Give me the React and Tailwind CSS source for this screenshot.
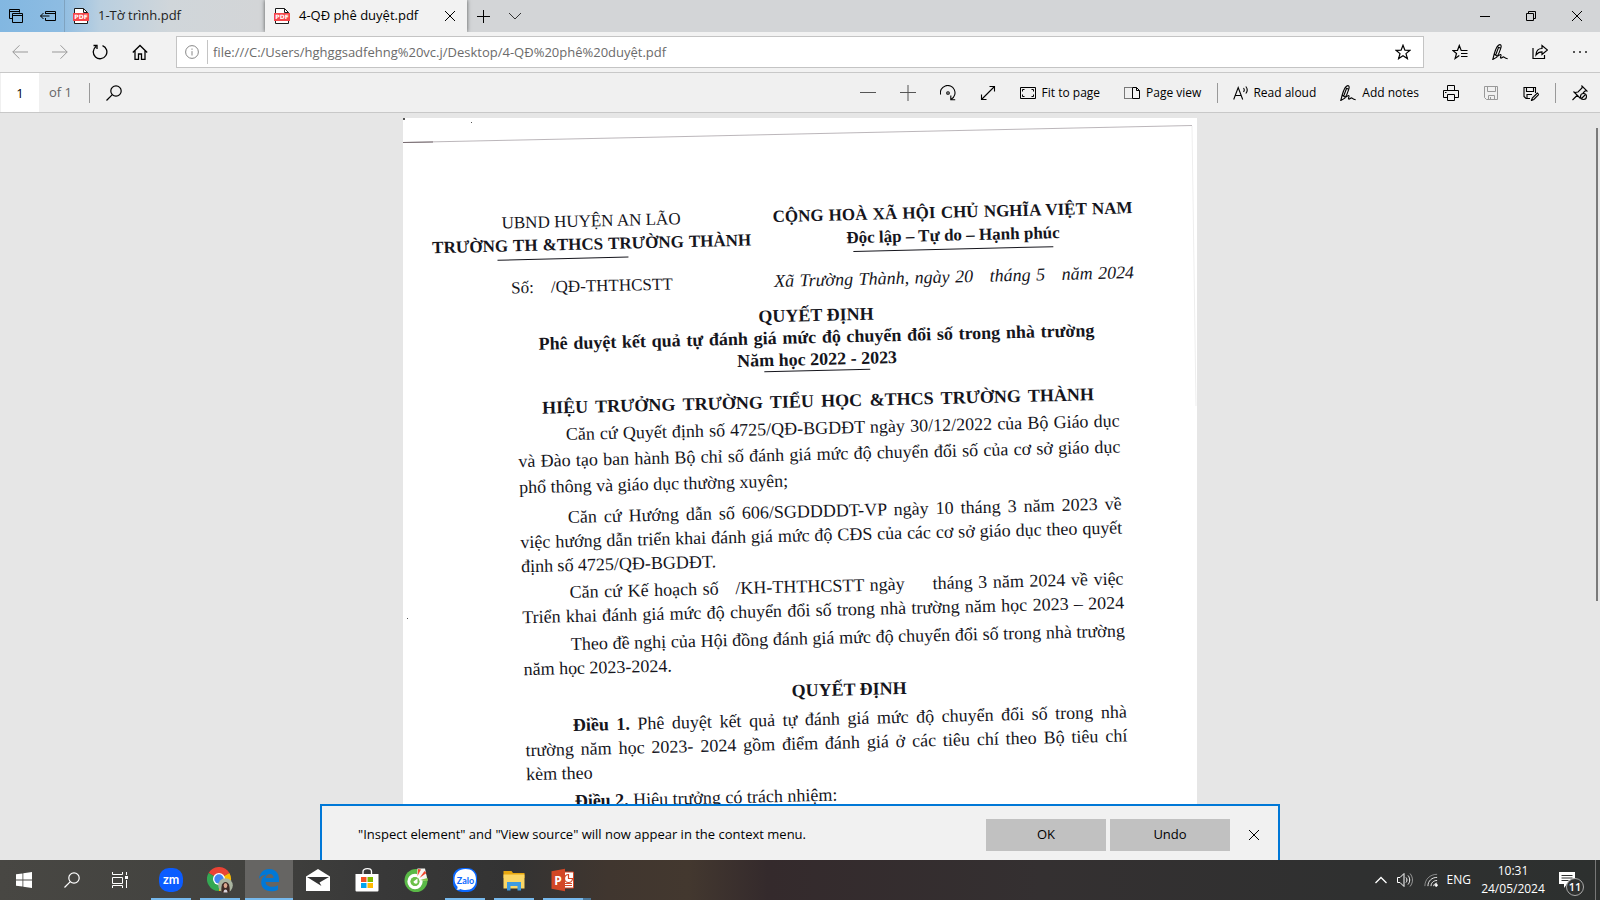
import { useState } from "react";

const underline = "after:absolute after:bottom-0 after:left-1 after:h-0.5 after:w-10 after:bg-[#76b9ed] after:content-['']";

const Icon = ({ children, className = "size-4", sw = 1 }) => (
  <svg
    className={className}
    viewBox="0 0 16 16"
    fill="none"
    stroke="currentColor"
    strokeWidth={sw}
    aria-hidden="true"
  >
    {children}
  </svg>
);

const CloseIcon = ({ className = "size-4" }) => (
  <Icon className={className}>
    <path d="M3 3l10 10M13 3L3 13" />
  </Icon>
);

const PenIcon = () => (
  <Icon sw={1.1}>
    <path d="M.8 15.500L2.200 10C3.500 5.500 5.500.8 7.800.6c1.700-.1 1.500 1.900 1 3.600C8 7 6.500 10.500 4.800 13.200L.8 15.500zM5.800 3l3 1.200M2.200 10l3 2.200M6.500 3.500L3.500 11.500M6 12.200c1.300-1.500 2.600-2.200 3-1.200.3.900-1.200 2.600-.3 3.100 1 .4 1.800-1.200 2.800-1.200s1 1.800 4.200 1.800" />
  </Icon>
);

const PdfIcon = () => (
  <svg className="size-4 shrink-0" viewBox="0 0 16 16" aria-hidden="true">
    <path d="M1.500.5h9l4 4v11h-13z" fill="#fff" stroke="#1b1b1b" />
    <path d="M10.500.5v4h4" fill="none" stroke="#1b1b1b" />
    <rect x="0" y="5" width="16" height="8" fill="#f5464a" />
    <text
      x="8"
      y="11.200"
      textAnchor="middle"
      fontSize="6"
      fontWeight="700"
      fill="#fff"
      fontFamily="DejaVu Sans"
    >
      PDF
    </text>
  </svg>
);

const IconButton = ({ label, className = "w-10", children }) => (
  <button
    type="button"
    aria-label={label}
    className={`flex h-full shrink-0 items-center justify-center ${className}`}
  >
    {children}
  </button>
);

const TabBar = () => (
  <div className="flex h-8 shrink-0 bg-[linear-gradient(90deg,#82b7e1_0px,#8dbce2_60px,#b9cfe0_100px,#d0d6da_170px,#d3d5d7_260px)]">
    <IconButton label="Tabs you've set aside" className="w-8">
      <Icon>
        <path d="M4.500 10.500H1.500v-9h10v3M1.500 3.500h10M4.500 5.500h10v9h-10zM4.500 7.500h10" />
      </Icon>
    </IconButton>
    <IconButton label="Set these tabs aside" className="w-8">
      <Icon>
        <path d="M5.500 6V3.500h10v9h-10V10M5.500 5.500h10M.5 8h9M3.500 5l-3 3 3 3" />
      </Icon>
    </IconButton>
    <div className="flex w-[201px] items-center gap-[9px] border-l border-[#7fa3c0] pl-2 text-[#222]">
      <PdfIcon />
      <span className="text-[13px]">1-Tờ trình.pdf</span>
    </div>
    <div className="flex w-[202px] items-center gap-[9px] bg-[#f2f2f2] pr-[9px] pl-[9px] text-black shadow-[0_0_4px_rgba(0,0,0,0.6)]">
      <PdfIcon />
      <span className="grow text-[13px]">4-QĐ phê duyệt.pdf</span>
      <button type="button" aria-label="Close tab">
        <CloseIcon />
      </button>
    </div>
    <IconButton label="New tab" className="w-8">
      <Icon>
        <path d="M8.500 2v13M2 8.500h13" />
      </Icon>
    </IconButton>
    <IconButton label="Show tab previews" className="w-8">
      <Icon className="size-4 text-[#333]">
        <path d="M2 5l6 6 6-6" />
      </Icon>
    </IconButton>
    <div className="ml-auto flex">
      <IconButton label="Minimize" className="w-[46px]">
        <Icon>
          <path d="M3 8.500h10" />
        </Icon>
      </IconButton>
      <IconButton label="Restore" className="w-[46px]">
        <Icon>
          <path d="M3.500 5.500h7v7h-7zM5.500 5.500v-2h7v7h-2" />
        </Icon>
      </IconButton>
      <IconButton label="Close" className="w-[46px]">
        <CloseIcon />
      </IconButton>
    </div>
  </div>
);

const NavBar = () => {
  const [url, setUrl] = useState(
    "file:///C:/Users/hghggsadfehng%20vc.j/Desktop/4-QĐ%20phê%20duyệt.pdf"
  );

  return (
    <div className="flex h-[41px] shrink-0 items-center border-b border-[#c8c8c8] bg-[#f2f2f2]">
      <IconButton label="Back">
        <Icon className="size-4 text-[#999]">
          <path d="M.8 8H16M7.500 1.300L.8 8l6.700 6.700" />
        </Icon>
      </IconButton>
      <IconButton label="Forward">
        <Icon className="size-4 text-[#999]">
          <path d="M0 8h15.200M8.500 1.300L15.200 8l-6.700 6.700" />
        </Icon>
      </IconButton>
      <IconButton label="Refresh">
        <Icon sw={1.3}>
          <path d="M10.500 1.600A6.800 6.800 0 1 1 4 2.500M1.500 1.500H5V5" />
        </Icon>
      </IconButton>
      <IconButton label="Home">
        <Icon sw={1.3}>
          <path d="M.8 8.500L8 1.500l7.200 7M3 6.800v8.500h3.500V10h3v5.300H13V6.800" />
        </Icon>
      </IconButton>
      <div className="mx-4 flex h-8 grow items-center border border-[#c4c4c4] bg-white">
        <Icon className="ml-2 size-[14px] text-[#777]">
          <circle cx="8" cy="8" r="7.300" />
          <path d="M8 7v5M8 4v1.500" />
        </Icon>
        <div className="ml-2 h-6 w-px bg-[#c4c4c4]" />
        <input
          aria-label="Address"
          value={url}
          onChange={(e) => setUrl(e.target.value)}
          className="ml-[5px] min-w-0 grow bg-transparent pt-[2px] text-[13px] text-[#6b6b6b] outline-none"
        />
        <IconButton label="Add to favorites">
          <Icon sw={1.2}>
            <path d="M8 1.200l1.900 4.900 5.100.2-4 3.300 1.400 5L8 11.800l-4.400 2.800 1.400-5-4-3.300 5.100-.2z" />
          </Icon>
        </IconButton>
      </div>
      <IconButton label="Favorites">
        <Icon sw={1.2}>
          <path d="M15.500 6.500H9.200L7.300 1.500 5.500 6.300.8 6.500l3.700 3-1.400 5 4.200-2.900M9 9.500h6.500M9 12.500h6.500" />
        </Icon>
      </IconButton>
      <IconButton label="Make a web note">
        <PenIcon />
      </IconButton>
      <IconButton label="Share">
        <Icon sw={1.2}>
          <path d="M1 4v10.500h11.500V11M4 11c.2-4 2.500-6.500 6-6.500V1.500L15.500 6 10 10.500V7.800C7.500 7.800 5.500 9 4 11z" />
        </Icon>
      </IconButton>
      <IconButton label="Settings and more">
        <Icon className="size-4 text-[#222]">
          <path d="M1 8h2M7 8h2M13 8h2" strokeWidth="1.500" />
        </Icon>
      </IconButton>
    </div>
  );
};

const Divider = () => <div className="h-5 w-px shrink-0 bg-[#999]" />;

const PdfToolbar = () => {
  const [page, setPage] = useState("1");

  return (
    <div className="flex h-10 shrink-0 items-center border-b border-[#c8c8c8] bg-[#f0f0f0] text-[12px] text-black">
      <input
        id="page-number"
        aria-label="Page number"
        value={page}
        onChange={(e) => setPage(e.target.value)}
        className="ml-px h-full w-[38px] bg-white pt-px text-center text-[13px] outline-none"
      />
      <label htmlFor="page-number" className="mr-[17px] ml-[10px] pt-px text-[13px] text-[#666]">
        of 1
      </label>
      <Divider />
      <IconButton label="Find" className="w-12">
        <Icon sw={1.2}>
          <circle cx="10" cy="6" r="5.200" />
          <path d="M6.300 9.700L.5 15.500" />
        </Icon>
      </IconButton>
      <div className="ml-auto flex h-full items-center pt-px">
        <IconButton label="Zoom out" className="w-[39px]">
          <Icon className="size-4 text-[#555]">
            <path d="M0 7.500h16" />
          </Icon>
        </IconButton>
        <IconButton label="Zoom in">
          <Icon className="size-4 text-[#555]">
            <path d="M0 7.500h16M8 0v16" />
          </Icon>
        </IconButton>
        <IconButton label="Rotate">
          <Icon sw={1.1}>
            <path d="M.6 9.500A7.300 7.300 0 1 1 11.500 14M10.800 10.500v4.300h4.400" />
            <circle cx="8" cy="8" r="1.300" />
          </Icon>
        </IconButton>
        <IconButton label="Full screen">
          <Icon sw={1.1}>
            <path d="M1.500 14.500l13-13M9.500 1.500h5v5M1.500 9.500v5h5" />
          </Icon>
        </IconButton>
        <button type="button" className="ml-3 flex items-center gap-[6px]">
          <Icon>
            <path d="M.5 2.500h15v11H.5zM2.500 6.500v-2h2M11.500 4.500h2v2M13.500 9.500v2h-2M4.500 11.500h-2v-2" />
          </Icon>
          Fit to page
        </button>
        <button type="button" className="ml-6 flex items-center gap-[6px]">
          <Icon>
            <path d="M7.500 2.500H.5v11h7" strokeDasharray="1 1" />
            <path d="M8.500 2.500h4l3 3v8h-7zM12.500 2.500v3h3" />
          </Icon>
          Page view
        </button>
        <div className="w-4" />
        <Divider />
        <button type="button" className="ml-[15px] flex items-center gap-1">
          <Icon sw={1.1}>
            <path d="M.7 14.500L5.200 2.500 9.700 14.500M2.300 10.500h5.800M10.500 3c1 1.300 1 2.700 0 4M12.800 1.500c1.900 2.300 1.900 4.700 0 7" />
          </Icon>
          Read aloud
        </button>
        <button type="button" className="ml-6 flex items-center gap-[6px]">
          <PenIcon />
          Add notes
        </button>
        <div className="w-3" />
        <IconButton label="Print">
          <Icon>
            <path d="M4.500 5.500v-5h7v5M4.500 12.500h-4v-7h15v7h-4M4.500 9.500h7v6h-7zM2 7.500h1.500" />
          </Icon>
        </IconButton>
        <IconButton label="Save">
          <Icon className="size-4 text-[#999]">
            <path d="M1.500 1.500h13v13h-11l-2-2zM4.500 1.500v5h8v-5M5.500 14.500v-4h6v4M7.500 12v2" />
          </Icon>
        </IconButton>
        <IconButton label="Save as">
          <Icon sw={1.1}>
            <path d="M7 13.500H3l-2-2v-9h11.500V8M3.500 2.500v4h7v-4M4 13.500v-4h5M8.500 15.500l.8-2.500 5-5 1.500 1.500-5 5z" />
          </Icon>
        </IconButton>
        <div className="w-1" />
        <Divider />
        <div className="w-1" />
        <IconButton label="Unpin toolbar">
          <Icon sw={1.1}>
            <path d="M.5 15l5-5M1.500 6.500l7 7M3 7.500l3-.5 4-4V1l5 5h-2l-2 2" />
            <circle cx="11.500" cy="11.500" r="3" />
            <path d="M9.500 13.500l4-4" />
          </Icon>
        </IconButton>
      </div>
    </div>
  );
};

// Lines that fill the full measure are stretched by justification
const Full = ({ children, indent }) => (
  <span
    className={`block whitespace-nowrap [text-align-last:justify] ${indent ? "pl-12" : ""}`}
  >
    {children}
  </span>
);

const Scan = () => (
  <article
    lang="vi"
    className="relative mx-auto mt-[5px] h-[1123px] w-[794px] shrink-0 overflow-hidden bg-white font-['Liberation_Serif',serif] text-[18px] text-[#15151c]"
  >
    <svg className="absolute inset-0 h-full w-full" viewBox="0 0 794 1123" aria-hidden="true">
      <path d="M0 24.500L70 23 260 19 440 15 789 7.500" stroke="#a9a3a8" strokeWidth=".8" fill="none" />
      <path d="M0 24.500L30 24" stroke="#776b70" fill="none" />
      <path d="M789 8l4 280" stroke="#eee" fill="none" />
      <path d="M0 0h2v2H0zM68 4h1v1h-1zM4 500h1v1H4z" fill="#555" />
    </svg>
    <div className="origin-top-left -rotate-[1.4deg] pt-24">
      <header className="flex gap-[22px] pl-[26px] text-[17px] leading-[23px]">
        <div className="w-[319px]">
          <p className="text-center whitespace-nowrap">UBND HUYỆN AN LÃO</p>
          <p className="font-bold">
            <Full>TRƯỜNG TH &amp;THCS TRƯỜNG THÀNH</Full>
          </p>
          <div className="mt-[2px] ml-[65px] w-[131px] border-t border-[#15151c]" />
          <p className="mt-4 ml-[78px] whitespace-pre">Số:    /QĐ-THTHCSTT</p>
        </div>
        <div className="w-[360px]">
          <p className="font-bold">
            <Full>CỘNG HOÀ XÃ HỘI CHỦ NGHĨA VIỆT NAM</Full>
          </p>
          <p className="text-center font-bold whitespace-nowrap">Độc lập – Tự do – Hạnh phúc</p>
          <div className="mx-auto mt-[2px] w-[200px] border-t border-[#15151c]" />
          <p className="mt-4 text-[18px] italic">
            <Full>Xã Trường Thành, ngày 20 &nbsp; tháng 5 &nbsp; năm 2024</Full>
          </p>
        </div>
      </header>
      <div className="ml-[107px] w-[602px]">
        <h1 className="mx-auto mt-3 w-[556px] text-center leading-[22px] font-bold">
          QUYẾT ĐỊNH
          <Full>Phê duyệt kết quả tự đánh giá mức độ chuyển đổi số trong nhà trường</Full>
          Năm học 2022 - 2023
        </h1>
        <div className="mx-auto w-[106px] border-t border-[#15151c]" />
        <h2 className="mx-auto mt-[18px] w-[552px] leading-6 font-bold">
          <Full>HIỆU TRƯỞNG TRƯỜNG TIỂU HỌC &amp;THCS TRƯỜNG THÀNH</Full>
        </h2>
        <p className="mt-[2px] leading-[26px]">
          <Full indent>Căn cứ Quyết định số 4725/QĐ-BGDĐT ngày 30/12/2022 của Bộ Giáo dục</Full>
          <Full>và Đào tạo ban hành Bộ chỉ số đánh giá mức độ chuyển đổi số của cơ sở giáo dục</Full>
          phổ thông và giáo dục thường xuyên;
        </p>
        <p className="mt-[6px] leading-6">
          <Full indent>Căn cứ Hướng dẫn số 606/SGDDDDT-VP ngày 10 tháng 3 năm 2023 về</Full>
          <Full>việc hướng dẫn triển khai đánh giá mức độ CĐS của các cơ sở giáo dục theo quyết</Full>
          định số 4725/QĐ-BGDĐT.
        </p>
        <p className="mt-[3px] leading-6">
          <Full indent>
            Căn cứ Kế hoạch số &nbsp; /KH-THTHCSTT ngày &nbsp; &nbsp; tháng 3 năm 2024 về việc
          </Full>
          <Full>Triển khai đánh giá mức độ chuyển đổi số trong nhà trường năm học 2023 – 2024</Full>
        </p>
        <p className="mt-1 leading-6">
          <Full indent>Theo đề nghị của Hội đồng đánh giá mức độ chuyển đổi số trong nhà trường</Full>
          năm học 2023-2024.
        </p>
        <h2 className="mt-1 pl-12 text-center leading-6 font-bold">QUYẾT ĐỊNH</h2>
        <p className="mt-[5px] leading-6">
          <Full indent>
            <b>Điều 1.</b> Phê duyệt kết quả tự đánh giá mức độ chuyển đổi số trong nhà
          </Full>
          <Full>trường năm học 2023- 2024 gồm điểm đánh giá ở các tiêu chí theo Bộ tiêu chí</Full>
          kèm theo
        </p>
        <p className="mt-1 pl-12 leading-6">
          <b>Điều 2.</b> Hiệu trưởng có trách nhiệm:
        </p>
      </div>
    </div>
  </article>
);

const Notification = () => (
  <div
    role="alert"
    className="absolute bottom-0 left-1/2 flex h-14 w-[960px] -translate-x-1/2 items-center border-2 border-b-0 border-[#0078d7] bg-[#f1f1f1] pt-[3px] pr-1 pl-9 text-[13px] text-black"
  >
    <p className="grow">"Inspect element" and "View source" will now appear in the context menu.</p>
    <button type="button" className="h-8 w-[120px] bg-[#c1c1c1]">
      OK
    </button>
    <button type="button" className="ml-1 h-8 w-[120px] bg-[#c1c1c1]">
      Undo
    </button>
    <IconButton label="Dismiss" className="ml-1 w-10">
      <CloseIcon />
    </IconButton>
  </div>
);

const ZoomLogo = () => (
  <svg className="size-6" viewBox="0 0 24 24" aria-hidden="true">
    <rect width="24" height="24" rx="10" fill="#0b5cff" />
    <text x="12" y="16" textAnchor="middle" fontSize="12.500" fontWeight="700" fill="#fff" fontFamily="Lato">
      zm
    </text>
  </svg>
);

const ChromeLogo = () => (
  <svg className="size-[26px]" viewBox="0 0 26 26" aria-hidden="true">
    <path d="M12 12L1.600 6A12 12 0 0 1 22.400 6z" fill="#ea4335" />
    <path d="M12 12L22.400 6A12 12 0 0 1 12 24z" fill="#fbbc05" />
    <path d="M12 12v12A12 12 0 0 1 1.600 6z" fill="#34a853" />
    <circle cx="12" cy="12" r="6" fill="#fff" />
    <circle cx="12" cy="12" r="4.700" fill="#4285f4" />
    <circle cx="18.500" cy="18.500" r="7.300" fill="#a9b4a0" />
    <path d="M14.500 25c-.5-4 0-10 4-10s4.500 6 4 10c-2.500 1.300-5.500 1.300-8 0z" fill="#3f2b26" />
    <ellipse cx="18.500" cy="18.500" rx="1.800" ry="2.600" fill="#d9a58c" />
    <path d="M16.500 25.500c0-2 .8-3 2-3s2 1 2 3z" fill="#d8d4dc" />
  </svg>
);

const EdgeLogo = () => (
  <svg className="size-6" viewBox="0 0 24 24" aria-hidden="true">
    <path
      d="M2 11C2.600 5 6.500 1 12.200 1 18.500 1 22 5.600 22 11.200V14H8.500c.2 3.200 3 4.800 6.300 4.800 2.400 0 4.500-.6 6.200-1.600v4.500c-2 1-4.300 1.500-7 1.500-6 0-9.800-3.500-9.800-8.700 0-3.600 2-6.500 5.300-8C5 7.200 3 8.600 2 11zm6.600-.9h8c0-2.600-1.200-4.200-3.700-4.200-2.400 0-4 1.700-4.300 4.200z"
      fill="#0078d7"
    />
  </svg>
);

const MailLogo = () => (
  <svg className="size-6" viewBox="0 0 24 24" aria-hidden="true">
    <path d="M0 8.500L12 1l12 7.500V23H0z" fill="#fff" />
    <path d="M1 9h22l-9.500 5.500 2 3.500z" fill="#333" />
  </svg>
);

const StoreLogo = () => (
  <svg className="size-6" viewBox="0 0 24 24" aria-hidden="true">
    <path d="M8 6V3.500C8 1.800 9.500.7 12.500.7s4 1.300 4 2.800V6" fill="none" stroke="#fff" strokeWidth="1.300" />
    <path d="M.5 6h23v16.500a1 1 0 0 1-1 1h-21a1 1 0 0 1-1-1z" fill="#fff" />
    <path d="M6 9h5.500v5H6z" fill="#f25022" />
    <path d="M12.500 9H18v5h-5.500z" fill="#7fba00" />
    <path d="M6 15h5.500v5H6z" fill="#00a4ef" />
    <path d="M12.500 15H18v5h-5.500z" fill="#ffb900" />
  </svg>
);

const CocCocLogo = () => (
  <svg className="size-6" viewBox="0 0 24 24" aria-hidden="true">
    <circle cx="12" cy="12.500" r="11.500" fill="#5ab947" />
    <path d="M12.500 12.500L13.500.5H21l2.500 12z" fill="#f6f6f2" />
    <circle cx="11" cy="13.500" r="6" fill="none" stroke="#fff" strokeWidth="3.300" />
    <circle cx="11" cy="13.500" r="4.500" fill="#6cc04a" />
    <path d="M9.500 13.500l4-3v4.500c-1.500 1.500-4 .5-4-1.500z" fill="#fff" />
    <path d="M13.500 8l.5-7 3 .5zM15.500 10l5-7 2 2z" fill="#f0492e" />
    <path d="M16 12l7.500-2v3z" fill="#7cc242" />
  </svg>
);

const ZaloLogo = () => (
  <svg className="size-6" viewBox="0 0 24 24" aria-hidden="true">
    <rect width="24" height="24" rx="9" fill="#0a68ff" />
    <path d="M12.500 1c6 0 10.500 3 10.500 10.500S18.500 22 12.500 22c-2 0-3.600-.3-5-1-1 .7-2.500 1-4 .8 1-.8 1.200-2 1-3C2.300 16.500 1.500 14 1.500 11.500 1.500 4.500 6 1 12.500 1z" fill="#fff" />
    <text x="12.500" y="15.500" textAnchor="middle" fontSize="9" fontWeight="700" fill="#0a68ff" fontFamily="Lato">
      Zalo
    </text>
  </svg>
);

const ExplorerLogo = () => (
  <svg className="size-6" viewBox="0 0 24 24" aria-hidden="true">
    <path d="M1.500 3h8l1.500 2h11.500v5h-21z" fill="#e8a810" />
    <path d="M1.500 6.500h21v14h-21z" fill="#fbd765" />
    <path d="M5 22.500V14h14v8.500h-3.500v-4.500h-7v4.500z" fill="#3d9be0" />
  </svg>
);

const PowerPointLogo = () => (
  <svg className="size-6" viewBox="0 0 24 24" aria-hidden="true">
    <path d="M12 4h10.500v16H12z" fill="#fff" stroke="#d24726" />
    <path d="M17.500 6.500v4h4a4 4 0 1 1-4-4zM14 15.500h7M14 17.500h7" fill="none" stroke="#d24726" strokeWidth="1.200" />
    <path d="M.5 3.200L14 .8v22.400L.5 20.800z" fill="#d24726" />
    <text x="7" y="16.500" textAnchor="middle" fontSize="12" fontWeight="700" fill="#fff" fontFamily="Open Sans">
      P
    </text>
  </svg>
);

const apps = [
  { name: "Zoom", logo: <ZoomLogo />, open: true },
  { name: "Google Chrome", logo: <ChromeLogo />, open: true },
  { name: "Microsoft Edge", logo: <EdgeLogo />, active: true },
  { name: "Mail", logo: <MailLogo /> },
  { name: "Microsoft Store", logo: <StoreLogo /> },
  { name: "Cốc Cốc", logo: <CocCocLogo /> },
  { name: "Zalo", logo: <ZaloLogo />, open: true },
  { name: "File Explorer", logo: <ExplorerLogo />, open: true },
  { name: "PowerPoint", logo: <PowerPointLogo />, open: true, stacked: true },
];

const Taskbar = () => (
  <div className="flex h-10 shrink-0 items-center bg-[linear-gradient(90deg,#484743_0%,#42423f_15%,#383838_24%,#333333_32%,#40362f_38%,#43382f_43%,#342a2c_48%,#343031_65%,#2f3030_85%,#2d302f_100%)] text-[12px] text-white">
    <IconButton label="Start" className="w-12">
      <svg className="size-4" viewBox="0 0 16 16" fill="#fff" aria-hidden="true">
        <path d="M0 2.300L6.500 1.400v6.200H0zM7.300 1.300L16 0v7.600H7.300zM0 8.400h6.500v6.200L0 13.700zM7.300 8.400H16V16l-8.700-1.300z" />
      </svg>
    </IconButton>
    <IconButton label="Search" className="w-12">
      <Icon sw={1.2}>
        <circle cx="10" cy="6" r="5.200" />
        <path d="M6.300 9.700L.5 15.500" />
      </Icon>
    </IconButton>
    <IconButton label="Task View" className="mr-[3px] w-12">
      <Icon>
        <path d="M.5 0v2.500h10V0M.5 5.500h10v6H.5zM.5 16v-2.500h10V16M14.500 0v3M14.500 8v8" />
        <path d="M13 4h3v3h-3z" fill="currentColor" stroke="none" />
      </Icon>
    </IconButton>
    <div className="flex h-full gap-px">
      {apps.map((app) => (
        <button
          key={app.name}
          type="button"
          aria-label={app.name}
          className={`relative flex h-full w-12 items-center justify-center ${
            app.active ? "bg-[#666563] shadow-[inset_0_-2px_0_#76b9ed]" : ""
          } ${app.open ? underline : ""} ${
            app.stacked
              ? "before:absolute before:right-[-4px] before:bottom-0 before:h-0.5 before:w-2 before:bg-[#4b7799] before:content-['']"
              : ""
          }`}
        >
          {app.logo}
        </button>
      ))}
    </div>
    <div className="ml-auto flex h-full items-center">
      <IconButton label="Show hidden icons" className="w-6">
        <Icon className="size-4" sw={1.3}>
          <path d="M2.500 11L8 5.500l5.500 5.500" />
        </Icon>
      </IconButton>
      <IconButton label="Volume" className="w-6">
        <Icon>
          <path d="M.5 5.500h2.500l4-4v13l-4-4H.5zM9 5.500c1.300 1.500 1.300 3.500 0 5M11 3.500c2.300 2.700 2.300 6.300 0 9" />
          <path d="M13 1.500c3.300 4 3.300 9 0 13" opacity=".5" />
        </Icon>
      </IconButton>
      <IconButton label="Network" className="w-7">
        <Icon className="size-[14px]">
          <path d="M1 15C1 7 7 1.500 15 1.500" opacity=".5" />
          <path d="M4.500 15C4.500 9 9 5 15 5M8 15c0-3.800 3.200-6.500 7-6.500M11 15c0-2 2-3.500 4-3.500" />
          <circle cx="14" cy="14" r="1.300" fill="currentColor" />
        </Icon>
      </IconButton>
      <span className="ml-[2px]">ENG</span>
      <div className="ml-2 w-[68px] text-center leading-[18px]">
        10:31
        <br />
        24/05/2024
      </div>
      <button
        type="button"
        aria-label="11 new notifications"
        className="relative flex h-full w-[49px] items-center border-r border-[#777] pl-3"
      >
        <Icon className="size-4">
          <path d="M0 0h16v12H8l-3 4v-4H0z" fill="#fff" stroke="none" />
          <path d="M2.500 3.500h11M2.500 6h11M2.500 8.500h7" stroke="#2f3130" />
        </Icon>
        <span className="absolute top-[18px] left-[19px] flex size-[18px] items-center justify-center rounded-full border border-[#aaa] bg-[#2f3130] text-[11px] font-semibold">
          11
        </span>
      </button>
      <div className="w-1" />
    </div>
  </div>
);

const App = () => {
  return (
    <div className="flex h-screen flex-col overflow-hidden font-['Open_Sans','Noto_Sans',sans-serif]">
      <TabBar />
      <NavBar />
      <PdfToolbar />
      <main className="relative flex min-h-0 grow flex-col overflow-hidden bg-[#e6e6e6]">
        <Scan />
        <div className="absolute top-[15px] right-[2px] h-[473px] w-[2px] bg-[#7a7a7a]" />
        <Notification />
      </main>
      <Taskbar />
    </div>
  );
};

export default App;
